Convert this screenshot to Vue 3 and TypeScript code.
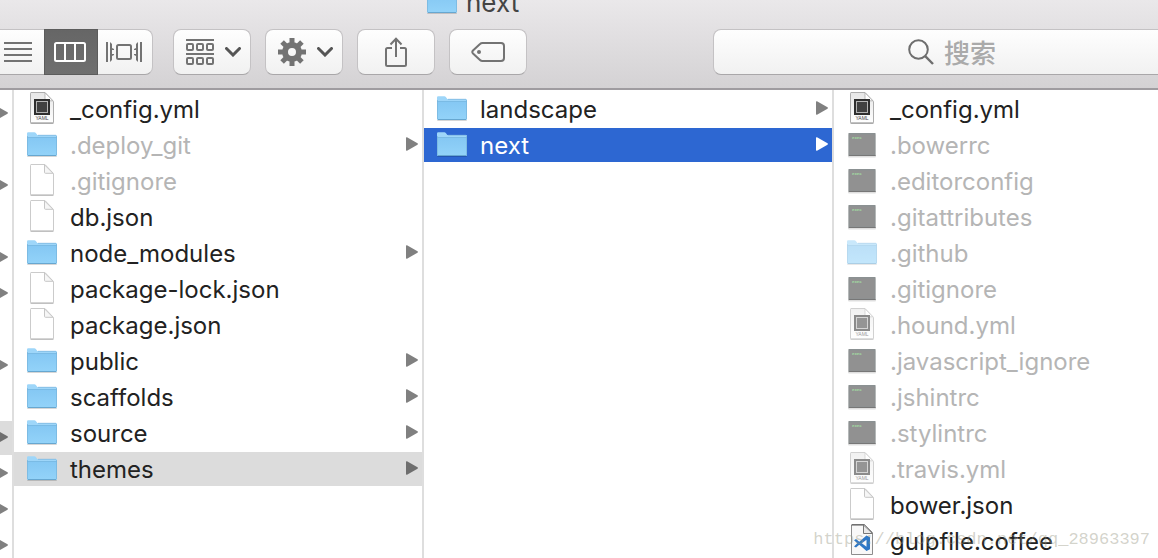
<script setup lang="ts">
type Kind = 'yaml' | 'folder' | 'blank' | 'exec' | 'code' | 'none'

interface Entry {
  name: string
  kind: Kind
  hidden?: boolean
  faded?: boolean
  arrow?: boolean
  state?: 'path' | 'active'
}

interface Column {
  id: string
  label: string
  entries: Entry[]
}

const parentArrows = [true, false, true, false, true, true, false, true, false, true, true, true, true]

const columns: Column[] = [
  {
    id: 'parent',
    label: 'Parent folder',
    entries: parentArrows.map((arrow, i): Entry => ({
      name: '',
      kind: 'none',
      arrow,
      state: i === 9 ? 'path' : undefined,
    })),
  },
  {
    id: 'project',
    label: 'Project',
    entries: [
      { name: '_config.yml', kind: 'yaml' },
      { name: '.deploy_git', kind: 'folder', hidden: true, arrow: true },
      { name: '.gitignore', kind: 'blank', hidden: true },
      { name: 'db.json', kind: 'blank' },
      { name: 'node_modules', kind: 'folder', arrow: true },
      { name: 'package-lock.json', kind: 'blank' },
      { name: 'package.json', kind: 'blank' },
      { name: 'public', kind: 'folder', arrow: true },
      { name: 'scaffolds', kind: 'folder', arrow: true },
      { name: 'source', kind: 'folder', arrow: true },
      { name: 'themes', kind: 'folder', arrow: true, state: 'path' },
    ],
  },
  {
    id: 'themes',
    label: 'themes',
    entries: [
      { name: 'landscape', kind: 'folder', arrow: true },
      { name: 'next', kind: 'folder', arrow: true, state: 'active' },
    ],
  },
  {
    id: 'next',
    label: 'next',
    entries: [
      { name: '_config.yml', kind: 'yaml' },
      { name: '.bowerrc', kind: 'exec', hidden: true },
      { name: '.editorconfig', kind: 'exec', hidden: true },
      { name: '.gitattributes', kind: 'exec', hidden: true },
      { name: '.github', kind: 'folder', hidden: true, faded: true },
      { name: '.gitignore', kind: 'exec', hidden: true },
      { name: '.hound.yml', kind: 'yaml', hidden: true, faded: true },
      { name: '.javascript_ignore', kind: 'exec', hidden: true },
      { name: '.jshintrc', kind: 'exec', hidden: true },
      { name: '.stylintrc', kind: 'exec', hidden: true },
      { name: '.travis.yml', kind: 'yaml', hidden: true, faded: true },
      { name: 'bower.json', kind: 'blank' },
      { name: 'gulpfile.coffee', kind: 'code' },
    ],
  },
]

const teeth = [0, 45, 90, 135, 180, 225, 270, 315]
</script>

<template>
  <div class="window">
    <svg class="defs" width="0" height="0" aria-hidden="true">
      <defs>
        <linearGradient id="folderFace" x1="0" y1="0" x2="0" y2="1">
          <stop offset="0" stop-color="#84c7f3" />
          <stop offset="1" stop-color="#93d3f9" />
        </linearGradient>
        <linearGradient id="paper" x1="0" y1="0" x2="0" y2="1">
          <stop offset="0" stop-color="#e6e6e6" />
          <stop offset="1" stop-color="#ffffff" />
        </linearGradient>
        <symbol id="folder" viewBox="0 0 32 34">
          <rect x="1" y="27" width="30" height="2" rx="1" fill="#000" opacity=".16" />
          <path d="M1 5.400Q1 4.200 2.200 4.200H8.400Q9.200 4.200 9.800 5L11.400 6.900H30Q31 6.900 31 8V27H1Z" fill="#9ed6f9" />
          <path d="M1 9H31V26.800Q31 28 30 28H2Q1 28 1 26.800Z" fill="url(#folderFace)" />
          <path d="M1 9.500H31" stroke="#7abbe5" fill="none" />
          <path d="M1.500 8V27M30.500 8V27" stroke="#78b5dc" opacity=".7" />
          <path d="M2 27.500H30" stroke="#67a7d0" />
          <path d="M12 7.300H30" stroke="#7fb9df" stroke-width=".8" />
        </symbol>
        <symbol id="blank" viewBox="0 0 32 34">
          <path d="M5 .5H19L27.500 9.500V30Q27.500 31 26.500 31H5.500Q4.500 31 4.500 30V1.500Q4.500 .5 5 .5Z" fill="#fff" stroke="#cbcbcb" />
          <path d="M4.500 31.200H27.500" stroke="#b0b0b0" />
          <path d="M18.500 .8V8.300Q18.500 9.300 19.500 9.300H27Z" fill="#f6f6f6" stroke="#c6c6c6" />
        </symbol>
        <symbol id="yaml" viewBox="0 0 32 34">
          <path d="M5 .5H19L27.500 9.500V30Q27.500 31 26.500 31H5.500Q4.500 31 4.500 30V1.500Q4.500 .5 5 .5Z" fill="url(#paper)" stroke="#adadad" />
          <path d="M4.500 31.200H27.500" stroke="#999" />
          <path d="M19 .8V8.800H27Z" fill="#fff" stroke="#aaa" stroke-width=".8" />
          <rect x="8" y="7" width="16" height="16" fill="#2e2e2e" />
          <rect x="10.500" y="9.500" width="11" height="11" fill="#404040" stroke="#b4b4b4" />
          <text x="16" y="28" text-anchor="middle" font-family="Liberation Sans, sans-serif" font-size="5" fill="#444">YAML</text>
        </symbol>
        <symbol id="exec" viewBox="0 0 32 34">
          <rect x="2" y="6" width="28" height="23.500" rx="1" fill="#000" opacity=".13" />
          <rect x="2.500" y="5" width="27" height="23" fill="#8b9192" />
          <rect x="3.500" y="6.500" width="25" height="20" fill="#919191" />
          <path d="M3 27.500H29.500" stroke="#777" />
          <text x="6" y="11" font-family="Liberation Mono, monospace" font-size="4" font-weight="700" fill="#a4e0a4">exec</text>
        </symbol>
        <symbol id="code" viewBox="0 0 32 34">
          <path d="M6 .5H18.500L26.500 8.500V30.500H5.500V1Z" fill="#f8f8f8" stroke="#8d8d8d" />
          <path d="M5.500 1H18.500" stroke="#555" />
          <path d="M17.500 1V9.500H26.500Z" fill="#e9e9e9" stroke="#777" />
          <path d="M20.500 11.500L24 13.200V25.300L20.500 27L13.300 20.800L10 23.500L8 22.400L11.300 19.300L8 16.200L10 15.100L13.300 17.800ZM20.500 15.800L15.800 19.300L20.500 22.800Z" fill="#2f78c6" fill-rule="evenodd" />
        </symbol>
      </defs>
    </svg>

    <header class="chrome">
      <h1 class="title">
        <svg class="icon" aria-hidden="true"><use href="#folder" /></svg>
        <span class="title-text">next</span>
      </h1>
      <div class="toolbar">
        <div class="segments" role="group" aria-label="View">
          <button type="button" class="segment first" aria-label="List view">
            <svg width="28" height="22" viewBox="0 0 28 22">
              <path d="M0 2H28M0 8H28M0 14H28M0 20H28" stroke="#737373" stroke-width="2" />
            </svg>
          </button>
          <button type="button" class="segment on" aria-label="Column view" aria-pressed="true">
            <svg width="32" height="20" viewBox="0 0 32 20" fill="none" stroke="#fff" stroke-width="2">
              <rect x="1" y="1" width="30" height="18" rx="1.500" />
              <path d="M11 1V19M21 1V19" />
            </svg>
          </button>
          <button type="button" class="segment last" aria-label="Cover flow view">
            <svg width="36" height="20" viewBox="0 0 36 20" fill="none" stroke="#737373" stroke-width="2">
              <path d="M1 0V20M35 0V20" />
              <path d="M4 0L6 2V6L8 7V13L6 14V18L4 20Z M32 0L30 2V6L28 7V13L30 14V18L32 20Z" fill="#737373" stroke="none" />
              <path d="M7 8V12M29 8V12" stroke="#f8f8f8" />
              <rect x="11" y="3" width="14" height="14" rx="1.500" />
            </svg>
          </button>
        </div>

        <div class="tools">
          <button type="button" class="tool split" aria-label="Group items">
            <svg width="28" height="26" viewBox="0 0 28 26" fill="none" stroke="#737373" stroke-width="2">
              <path d="M0 1H28M0 15H28" />
              <rect x="1" y="5" width="6" height="6" rx="1" />
              <rect x="11" y="5" width="6" height="6" rx="1" />
              <rect x="21" y="5" width="6" height="6" rx="1" />
              <rect x="1" y="19" width="6" height="6" rx="1" />
              <rect x="11" y="19" width="6" height="6" rx="1" />
              <rect x="21" y="19" width="6" height="6" rx="1" />
            </svg>
            <svg width="16" height="10" viewBox="0 0 16 10" fill="none" stroke="#555" stroke-width="3">
              <path d="M1.500 1.500L8 8L14.500 1.500" stroke-linecap="round" />
            </svg>
          </button>
          <button type="button" class="tool split" aria-label="Actions">
            <svg width="28" height="28" viewBox="-14 -14 28 28" fill="#737373">
              <path v-for="t in teeth" :key="t" d="M-2.500 -14H2.500V-8H-2.500Z" :transform="`rotate(${t})`" />
              <circle r="7" fill="none" stroke="#737373" stroke-width="6" />
            </svg>
            <svg width="16" height="10" viewBox="0 0 16 10" fill="none" stroke="#555" stroke-width="3">
              <path d="M1.500 1.500L8 8L14.500 1.500" stroke-linecap="round" />
            </svg>
          </button>
          <button type="button" class="tool" aria-label="Share">
            <svg width="22" height="30" viewBox="0 0 22 30" fill="none" stroke="#737373" stroke-width="2">
              <path d="M7 11H2.500Q1 11 1 12.500V27.500Q1 29 2.500 29H19.500Q21 29 21 27.500V12.500Q21 11 19.500 11H15" />
              <path d="M11 20V1.500M5.500 7.500L11 1.700L16.500 7.500" />
            </svg>
          </button>
          <button type="button" class="tool" aria-label="Edit tags">
            <svg width="34" height="20" viewBox="0 0 34 20" fill="none" stroke="#737373" stroke-width="2">
              <path d="M11.500 1H30Q33 1 33 4V16Q33 19 30 19H11.500Q10 19 9 18L2 11.500Q.6 10 2 8.500L9 2Q10 1 11.500 1Z" />
              <circle cx="8" cy="10" r="2" fill="#737373" stroke="none" />
            </svg>
          </button>
        </div>

        <label class="search">
          <svg width="26" height="26" viewBox="0 0 26 26" fill="none" stroke="#6e6e6e" stroke-width="2">
            <circle cx="10.500" cy="10.500" r="9.300" />
            <path d="M17.200 17.200L25 25" stroke-width="2.400" />
          </svg>
          <input type="text" placeholder="搜索" aria-label="搜索" />
        </label>
      </div>
    </header>

    <main class="browser">
      <ul v-for="col in columns" :key="col.id" class="column" :class="col.id" :aria-label="col.label">
        <li v-for="(entry, i) in col.entries" :key="i">
          <button
            type="button"
            class="row"
            :class="[entry.state, { hidden: entry.hidden, faded: entry.faded }]"
            :aria-label="entry.name || 'Folder'"
          >
            <svg v-if="entry.kind !== 'none'" class="icon" aria-hidden="true"><use :href="`#${entry.kind}`" /></svg>
            <span v-if="entry.name" class="name">{{ entry.name }}</span>
            <svg v-if="entry.arrow" class="arrow" width="12" height="14" viewBox="0 0 12 14" aria-hidden="true">
              <path d="M0 1Q0 0 1 .3L11.500 6.300Q12.300 7 11.500 7.700L1 13.700Q0 14 0 13Z" />
            </svg>
          </button>
        </li>
      </ul>
    </main>

    <div class="watermark">https://blog.csdn.net/qq_28963397</div>
  </div>
</template>

<style>
body {
  margin: 0;
}
</style>

<style scoped>
.window {
  position: relative;
  display: flex;
  flex-direction: column;
  height: 100vh;
  overflow: hidden;
  background: #fff;
  color: #222;
  font-family: Inter, "Noto Sans CJK SC", sans-serif;
  font-size: 24px;
}

.defs {
  position: absolute;
}

button {
  margin: 0;
  padding: 0;
  border: 0;
  background: none;
  font: inherit;
  color: inherit;
}

svg {
  display: block;
  flex: none;
}

.chrome {
  flex: none;
  box-sizing: border-box;
  height: 90px;
  overflow: hidden;
  background: linear-gradient(#eae8ea, #d4d2d4);
  border-bottom: 2px solid #9f9ca0;
}

.title {
  display: flex;
  align-items: flex-end;
  gap: 8px;
  box-sizing: border-box;
  height: 29px;
  margin: 0;
  padding: 0 0 10px 426px;
  font-size: 26px;
  font-weight: 400;
  color: #444;
}

.title-text {
  line-height: 32px;
}

.icon {
  width: 32px;
  height: 34px;
}

.toolbar {
  display: flex;
}

.segments {
  display: flex;
  margin-right: 20px;
}

.segment,
.tool,
.search {
  display: flex;
  align-items: center;
  justify-content: center;
  box-sizing: border-box;
  height: 46px;
  border: 1px solid #c4c2c4;
  border-bottom-color: #a9a7a9;
  background: linear-gradient(#fefefe, #f1f1f1);
}

.segment {
  width: 55px;
  padding-right: 2px;
}

.segment.first {
  width: 44px;
  padding-right: 8px;
  border-left: 0;
  border-right: 0;
}

.segment.on {
  width: 54px;
  border-color: #5c5c5c;
  background: linear-gradient(#666, #6f6f6f);
}

.segment.last {
  border-left: 0;
  border-radius: 0 8px 8px 0;
}

.tools {
  display: flex;
  gap: 14px;
}

.tool {
  width: 78px;
  border-radius: 8px;
}

.tool.split {
  gap: 11px;
  padding-left: 2px;
}

.search {
  flex: 1;
  gap: 10px;
  margin-left: 186px;
  margin-right: -33px;
  border-radius: 8px;
}

.search input {
  width: 52px;
  padding: 0;
  border: 0;
  outline: 0;
  background: none;
  font-family: "Noto Sans CJK SC", sans-serif;
  font-size: 26px;
  font-weight: 500;
  line-height: 36px;
  color: #333;
}

.search input::placeholder {
  color: #aaa;
  opacity: 1;
}

.browser {
  flex: 1;
  min-height: 0;
  display: grid;
  grid-template-columns: 14px 410fr 410fr 324fr;
}

.column {
  display: flex;
  flex-direction: column;
  gap: 2px;
  min-width: 0;
  margin: 0;
  padding: 2px 0 0;
  overflow: hidden;
  list-style: none;
  border-right: 2px solid #dedede;
}

.column.parent {
  padding-top: 7px;
}

.column.next {
  border-right: 0;
}

.row {
  display: flex;
  align-items: center;
  gap: 12px;
  box-sizing: border-box;
  width: 100%;
  height: 34px;
  padding: 0 4px 0 12px;
  text-align: left;
  line-height: 34px;
}

.parent .row {
  justify-content: flex-end;
  padding-left: 0;
}

.name {
  flex: 1;
  padding-top: 2px;
  white-space: nowrap;
}

.arrow {
  margin-bottom: 2px;
  fill: #808080;
}

.hidden {
  color: #b5b5b5;
}

.faded .icon {
  opacity: 0.55;
}

.path {
  background: #dcdcdc;
}

.path .arrow {
  fill: #6e6e6e;
}

.active {
  background: #2d67d2;
  color: #fff;
}

.active .arrow {
  fill: #fff;
}

.watermark {
  position: absolute;
  right: 8px;
  bottom: 6px;
  font-family: "Liberation Mono", monospace;
  font-size: 17px;
  line-height: 24px;
  color: rgba(150, 150, 130, 0.42);
  pointer-events: none;
}
</style>
